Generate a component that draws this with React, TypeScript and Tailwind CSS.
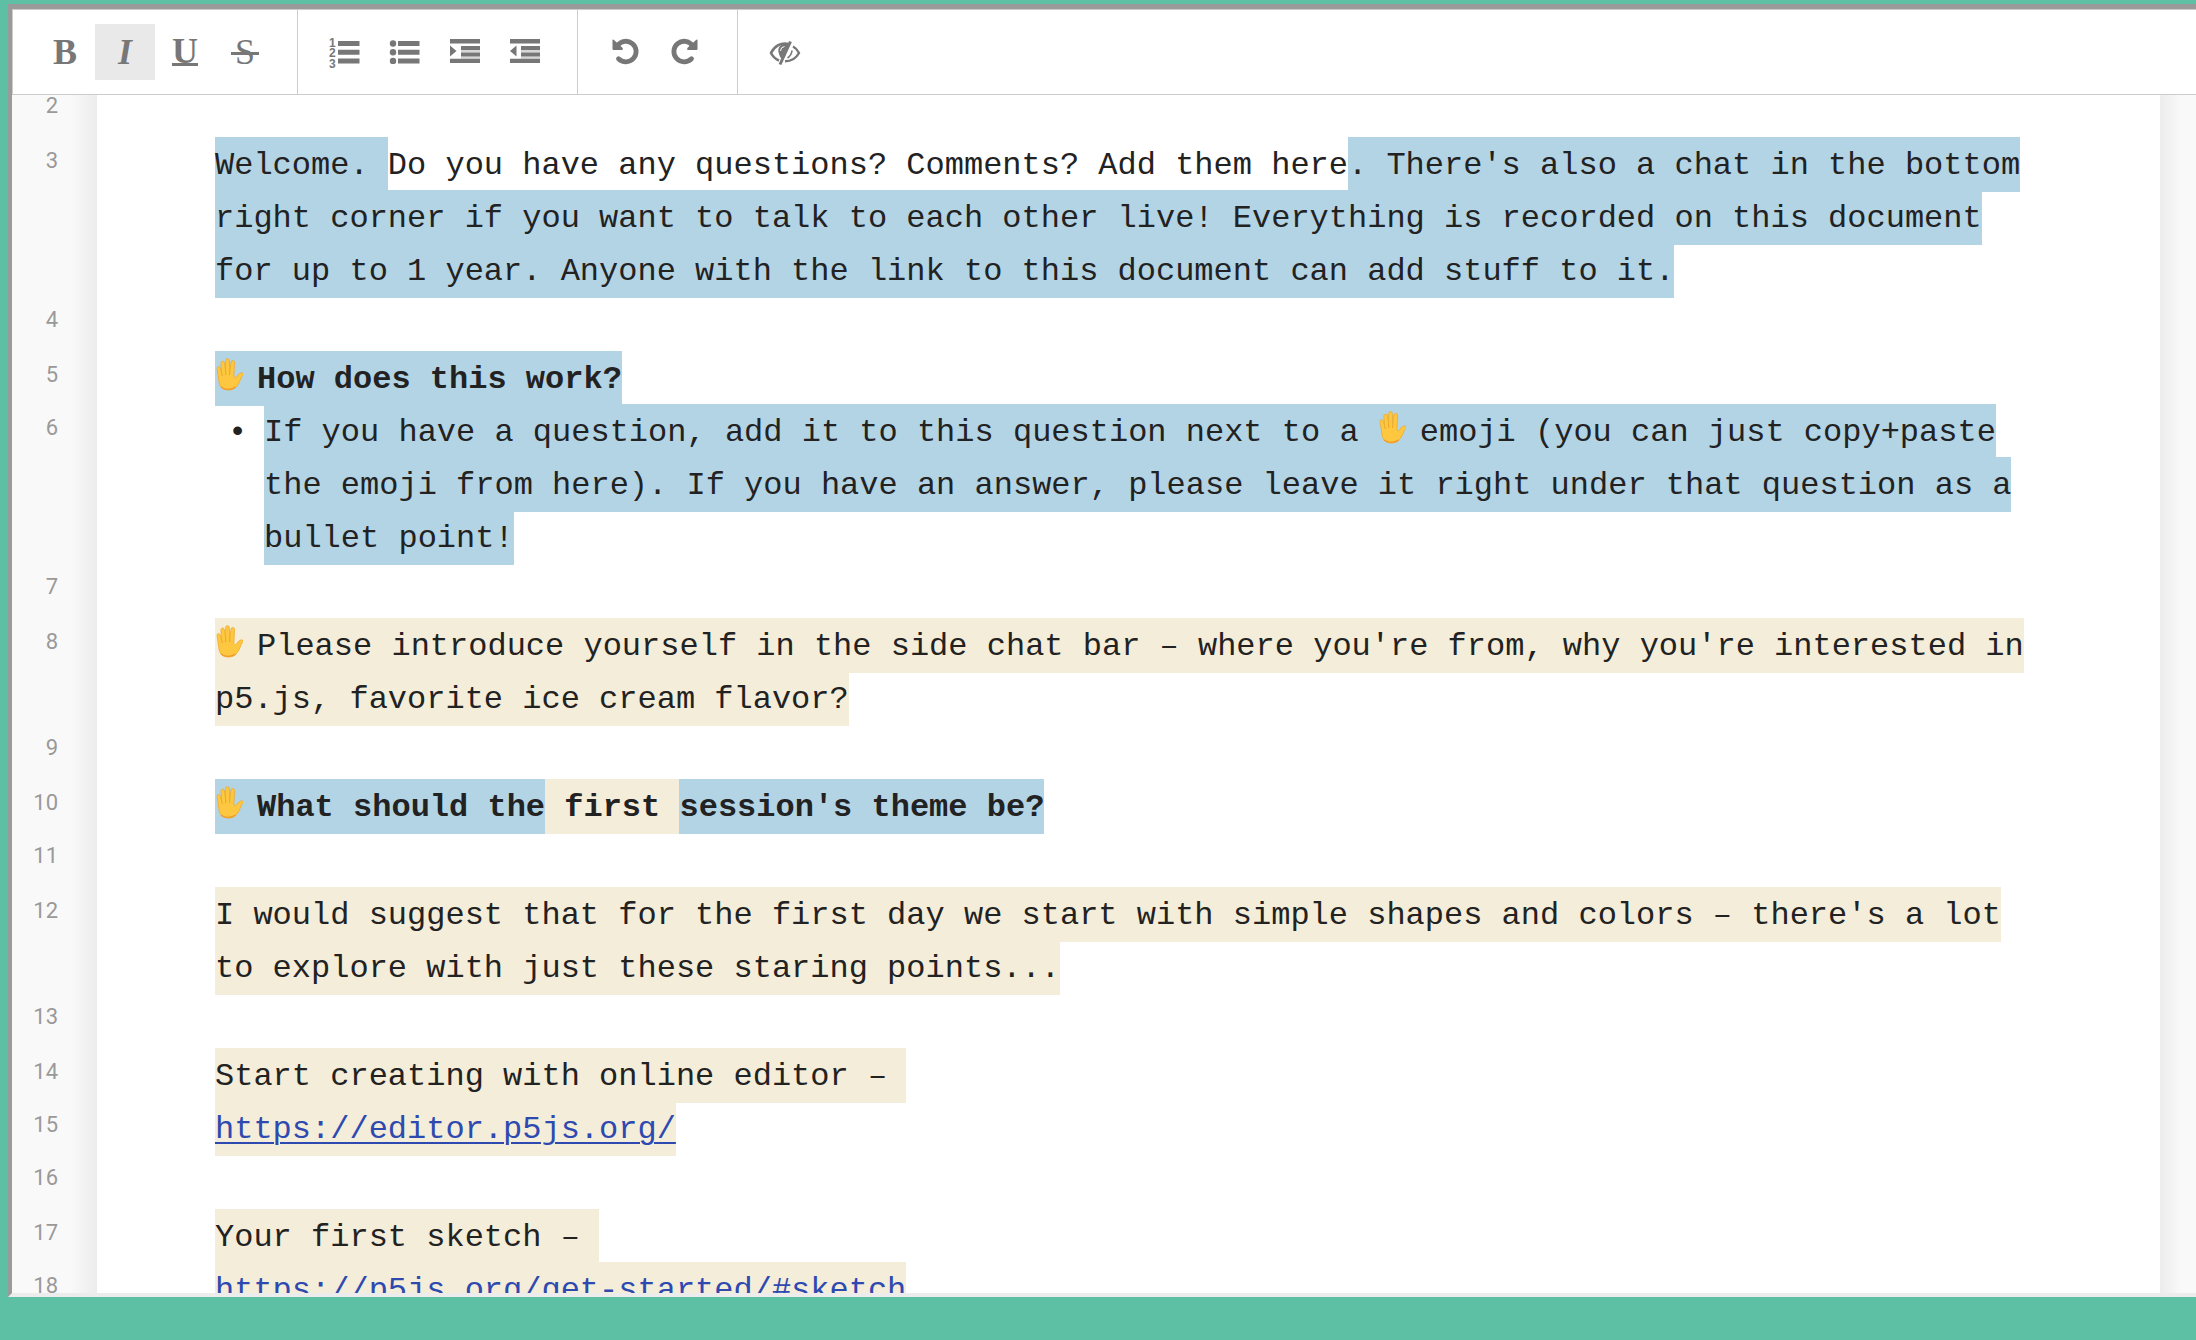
import type { ReactNode } from "react";

type Mark = "blue" | "cream";

const markColors: Record<Mark, string> = {
  blue: "bg-[#b3d4e5]",
  cream: "bg-[#f4edd9]",
};

const Author = ({ mark, children }: { mark: Mark; children: ReactNode }) => (
  <span className={`pt-[10px] pb-2 ${markColors[mark]}`}>{children}</span>
);

const Hand = () => (
  <svg viewBox="-1 0 28 33" className="mr-[14px] inline-block h-[33px] w-7 align-[-3px]" role="img" aria-label="raised hand">
    <path
      d="M1 10.500c-.2-2 2.600-2.600 3.200-.5L5.600 15 4.900 5.300c-.2-2.600 3-3 3.500-.5L9.600 13 9.700 2.600c0-2.600 3.500-2.600 3.600 0L13.800 13l1.300-9c.4-2.300 3.600-1.900 3.400.6L17.900 18c.2 2 1.500 2.300 2.500 1l2.400-3c1.400-1.500 5-1.200 4.800.3-.2 1-1.800 1.700-2.500 3.500-1.300 3.500-2.800 7-5.400 9.700-3 3.200-11 3.400-14 .3C2.300 26.500 3 20.500 1 10.500z"
      fill="#fdc840"
      stroke="#f0a82a"
      strokeWidth="0.8"
    />
    <path d="M5.600 15l.8 3M9.600 13l.2 4M13.800 13l-.2 4" stroke="#e9a02b" strokeWidth="0.9" fill="none" />
    <path d="M5 29c3.500 3.200 11 3 14.500 0" stroke="#ee9a2c" strokeWidth="1.200" fill="none" />
  </svg>
);

// toolbar icons, all drawn around the centre of a 32 x 32 box
const Icon = ({ children }: { children: ReactNode }) => (
  <svg viewBox="-16 -16 32 32" className="size-8" fill="currentColor" aria-hidden="true">
    {children}
  </svg>
);

const OrderedListIcon = () => (
  <Icon>
    <path d="M-7-11H14.500v5H-7zM-7-2.300H14.500v5H-7zM-7 6.400H14.500v5H-7z" />
    <g fontFamily="Liberation Sans, sans-serif" fontWeight="bold" fontSize="12">
      <text x="-16" y="-5.500">1</text>
      <text x="-16" y="5">2</text>
      <text x="-16" y="15.500">3</text>
    </g>
  </Icon>
);

const BulletListIcon = () => (
  <Icon>
    <path d="M-7-11H14.500v5H-7zM-7-2.300H14.500v5H-7zM-7 6.400H14.500v5H-7z" />
    <circle cx="-12" cy="-8.500" r="3.200" />
    <circle cx="-12" cy="0.200" r="3.200" />
    <circle cx="-12" cy="8.900" r="3.200" />
  </Icon>
);

const IndentIcon = () => (
  <Icon>
    <path d="M-15-13H15v4.400H-15zM-4-6H15v4H-4zM-4 .4H15v4H-4zM-15 6.700H15v4.400H-15z" />
    <path d="M-4-2H15V.4H-4zM-4 4.400H15v2.300H-4z" opacity="0.3" />
    <path d="M-15-6.500l6.500 5.500-6.500 5.500z" />
  </Icon>
);

const OutdentIcon = () => (
  <Icon>
    <path d="M-15-13H15v4.400H-15zM-4-6H15v4H-4zM-4 .4H15v4H-4zM-15 6.700H15v4.400H-15z" />
    <path d="M-4-2H15V.4H-4zM-4 4.400H15v2.300H-4z" opacity="0.3" />
    <path d="M-8.500-6.500L-15-1l6.500 5.500z" />
  </Icon>
);

const UndoIcon = () => (
  <Icon>
    <path d="M-7.500-6.500A10.300 10.300 0 1 1-6.500 6.800" fill="none" stroke="currentColor" strokeWidth="4.800" strokeLinecap="round" />
    <path d="M-12.500-11.500q0-1.500 1.200-.7l9 8.200q.8 1.800-.8 2h-8.400q-1 0-1-1z" />
  </Icon>
);

const RedoIcon = () => (
  <Icon>
    <path d="M7.500-6.500A10.300 10.300 0 1 0 6.500 6.800" fill="none" stroke="currentColor" strokeWidth="4.800" strokeLinecap="round" />
    <path d="M12.500-11.500q0-1.500-1.200-.7l-9 8.200q-.8 1.800.8 2h8.400q1 0 1-1z" />
  </Icon>
);

const EyeSlashIcon = () => (
  <Icon>
    <path d="M3.500-8C-4-10-10.500-6-14 1c1.800 3.500 4.500 6 8 7.500" fill="none" stroke="currentColor" strokeWidth="2.600" />
    <path d="M3.500-8.500C-4-9-7.500-5-6.500 0c.5 3 1.800 5 3 7z" />
    <path d="M-4.500-1q0-4 4-4.500" fill="none" stroke="#fff" strokeWidth="1" />
    <path d="M5.500-10.500L-5 12.500" fill="none" stroke="currentColor" strokeWidth="3" />
    <path d="M8-5.500C10.800-4 12.800-1.800 14 1 11 6.500 6.500 9.300 0 9.300" fill="none" stroke="currentColor" strokeWidth="2.400" />
    <path d="M7-1.500Q6.500 3.500 2.500 6" fill="none" stroke="currentColor" strokeWidth="1.600" />
  </Icon>
);

type Tool = { label: string; icon: ReactNode; active?: boolean };

const toolGroups: Tool[][] = [
  [
    { label: "Bold", icon: <span>B</span> },
    { label: "Italic", icon: <span className="italic">I</span>, active: true },
    { label: "Underline", icon: <span className="border-b-3 leading-6">U</span> },
    {
      label: "Strikethrough",
      icon: (
        <span className="relative font-normal before:absolute before:-inset-x-1 before:top-1/2 before:h-[3px] before:bg-current">
          S
        </span>
      ),
    },
  ],
  [
    { label: "Ordered list", icon: <OrderedListIcon /> },
    { label: "Unordered list", icon: <BulletListIcon /> },
    { label: "Indent", icon: <IndentIcon /> },
    { label: "Outdent", icon: <OutdentIcon /> },
  ],
  [
    { label: "Undo", icon: <UndoIcon /> },
    { label: "Redo", icon: <RedoIcon /> },
  ],
  [{ label: "Toggle authorship colors", icon: <EyeSlashIcon /> }],
];

const Toolbar = () => (
  <header className="flex shrink-0 border border-r-0 border-[#ccc] bg-white font-['Liberation_Serif',serif] text-[36px] leading-10 font-bold text-[#777]">
    {toolGroups.map((group, i) => (
      <div key={i} className="flex border-r border-[#ccc] py-[14px] pr-[22px] pl-[17px] first:pl-[22px] last:border-r-0">
        {group.map(({ label, icon, active }) => (
          <button
            key={label}
            type="button"
            aria-label={label}
            aria-pressed={active}
            className={`flex h-14 w-[60px] items-center justify-center ${active ? "bg-[#e9e9e9]" : ""}`}
          >
            {icon}
          </button>
        ))}
      </div>
    ))}
  </header>
);

type Line = { n: number; blank?: boolean; bullet?: boolean; body?: ReactNode };

const lines: Line[] = [
  { n: 2, blank: true },
  {
    n: 3,
    body: (
      <>
        <Author mark="blue">Welcome. </Author>Do you have any questions? Comments? Add them here
        <Author mark="blue">
          . There's also a chat in the bottom right corner if you want to talk to each other live! Everything is
          recorded on this document for up to 1 year. Anyone with the link to this document can add stuff to it.
        </Author>
      </>
    ),
  },
  { n: 4, blank: true },
  { n: 5, body: <Author mark="blue"><Hand /><b>How does this work?</b></Author> },
  {
    n: 6,
    bullet: true,
    body: (
      <Author mark="blue">
        If you have a question, add it to this question next to a <Hand />emoji (you can just copy+paste the emoji from
        here). If you have an answer, please leave it right under that question as a bullet point!
      </Author>
    ),
  },
  { n: 7, blank: true },
  {
    n: 8,
    body: (
      <Author mark="cream">
        <Hand />Please introduce yourself in the side chat bar – where you're from, why you're interested in p5.js,
        favorite ice cream flavor?
      </Author>
    ),
  },
  { n: 9, blank: true },
  {
    n: 10,
    body: (
      <b>
        <Author mark="blue"><Hand />What should the</Author>
        <Author mark="cream"> first </Author>
        <Author mark="blue">session's theme be?</Author>
      </b>
    ),
  },
  { n: 11, blank: true },
  {
    n: 12,
    body: (
      <Author mark="cream">
        I would suggest that for the first day we start with simple shapes and colors – there's a lot to explore with
        just these staring points...
      </Author>
    ),
  },
  { n: 13, blank: true },
  { n: 14, body: <Author mark="cream">Start creating with online editor –&nbsp;</Author> },
  {
    n: 15,
    body: (
      <Author mark="cream">
        <a href="https://editor.p5js.org/" className="text-[#2e49b0] underline decoration-2 underline-offset-4">https://editor.p5js.org/</a>
      </Author>
    ),
  },
  { n: 16, blank: true },
  { n: 17, body: <Author mark="cream">Your first sketch –&nbsp;</Author> },
  {
    n: 18,
    body: (
      <Author mark="cream">
        <a href="https://p5js.org/get-started/#sketch" className="text-[#2e49b0] underline decoration-2 underline-offset-4">https://p5js.org/get-started/#sketch</a>
      </Author>
    ),
  },
];

const PadLine = ({ n, blank, bullet, body }: Line) => (
  <div className={`flex ${blank ? "h-[55px]" : ""}`}>
    <div className="w-[85px] shrink-0 bg-linear-to-r from-[#f9f9f9] from-70% to-[#ececec] pr-[39px] text-right font-[Roboto,sans-serif] text-[22px] leading-11 text-[#999]">
      {n}
    </div>
    <div className="flex grow bg-white px-[118px] leading-[53px]">
      {bullet && <span className="w-[49px] shrink-0 pr-1 text-center">•</span>}
      <div>{body}</div>
    </div>
    <div className="w-9 shrink-0 bg-linear-to-r from-[#ececec] to-[#f9f9f9] to-60%" />
  </div>
);

const App = () => (
  <div className="h-screen overflow-hidden bg-[#5dbfa3] pt-1 pb-[43px] pl-2">
    <div className="flex h-full flex-col border-t-[5px] border-b-4 border-l-4 border-t-[#9a9a9a] border-b-[#ececec] border-l-[#9a9a9a]">
      <Toolbar />
      <main className="min-h-0 grow overflow-hidden font-['Liberation_Mono',monospace] text-[32px] text-[#222]">
        <div className="-mt-[11px]">
          {lines.map((line) => (
            <PadLine key={line.n} {...line} />
          ))}
        </div>
      </main>
    </div>
  </div>
);

export default App;
